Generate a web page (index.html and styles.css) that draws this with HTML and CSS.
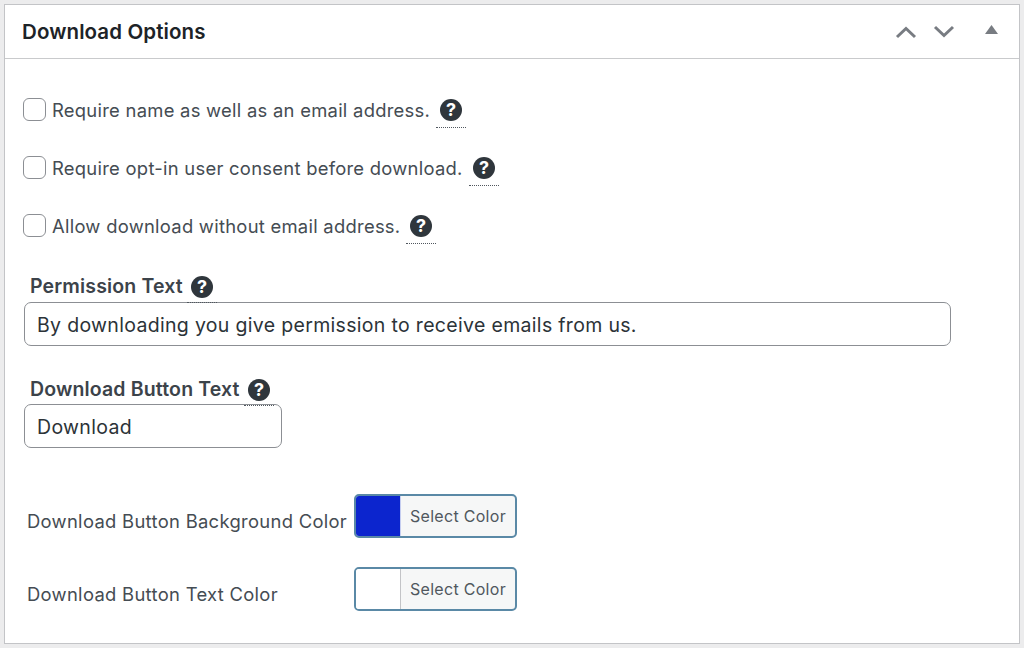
FILE: index.html
```html
<!DOCTYPE html>
<html lang="en">
<head>
<meta charset="utf-8">
<title>Download Options</title>
<link rel="stylesheet" href="styles.css">
</head>
<body>
<section class="panel">
  <header class="panel-head">
    <h2 class="panel-title">Download Options</h2>
    <div class="panel-actions">
      <svg class="chev" width="22" height="14" viewBox="0 0 22 14"><path d="M2 12 L11 3.5 L20 12" /></svg>
      <svg class="chev" width="22" height="14" viewBox="0 0 22 14"><path d="M2 2 L11 10.5 L20 2" /></svg>
      <svg class="tri" width="13" height="9" viewBox="0 0 13 9"><path d="M6.5 0 L13 9 L0 9 Z" /></svg>
    </div>
  </header>
  <div class="panel-body">
    <div class="check-list">
      <label class="check-row"><span class="box"></span><span class="check-text">Require name as well as an email address.</span>
        <span class="tip"><svg class="help" viewBox="0 0 22 22"><circle cx="11" cy="11" r="11"/><text x="11" y="17.2" text-anchor="middle">?</text></svg></span></label>
      <label class="check-row"><span class="box"></span><span class="check-text">Require opt-in user consent before download.</span>
        <span class="tip"><svg class="help" viewBox="0 0 22 22"><circle cx="11" cy="11" r="11"/><text x="11" y="17.2" text-anchor="middle">?</text></svg></span></label>
      <label class="check-row"><span class="box"></span><span class="check-text">Allow download without email address.</span>
        <span class="tip"><svg class="help" viewBox="0 0 22 22"><circle cx="11" cy="11" r="11"/><text x="11" y="17.2" text-anchor="middle">?</text></svg></span></label>
    </div>
    <div class="field field-permission">
      <div class="field-label"><span>Permission Text</span>
        <span class="tip tip-label"><svg class="help" viewBox="0 0 22 22"><circle cx="11" cy="11" r="11"/><text x="11" y="17.2" text-anchor="middle">?</text></svg></span></div>
      <div class="input input-wide">By downloading you give permission to receive emails from us.</div>
    </div>
    <div class="field field-button">
      <div class="field-label"><span>Download Button Text</span>
        <span class="tip tip-label"><svg class="help" viewBox="0 0 22 22"><circle cx="11" cy="11" r="11"/><text x="11" y="17.2" text-anchor="middle">?</text></svg></span></div>
      <div class="input input-short">Download</div>
    </div>
    <div class="colors">
      <div class="color-row"><span class="color-label">Download Button Background Color</span>
        <div class="picker"><span class="swatch swatch-blue"></span><span class="picker-text">Select Color</span></div></div>
      <div class="color-row"><span class="color-label">Download Button Text Color</span>
        <div class="picker"><span class="swatch swatch-white"></span><span class="picker-text">Select Color</span></div></div>
    </div>
  </div>
</section>
</body>
</html>
```

FILE: styles.css
```css
* { box-sizing: border-box; }
html, body { height: 100%; }
body {
  margin: 0;
  padding: 4px 4px 4px 4px;
  background: #ececed;
  font-family: Inter, "Liberation Sans", sans-serif;
  color: #454c53;
  overflow: hidden;
}
.panel {
  width: 1016px;
  height: 640px;
  background: #fff;
  border: 1px solid #c3c4c7;
}
.panel-head {
  height: 54px;
  display: flex;
  align-items: center;
  justify-content: space-between;
  border-bottom: 1px solid #c9cacc;
  padding: 0 21px 0 17px;
}
.panel-title {
  margin: 0;
  font-size: 20.5px;
  font-weight: 600;
  color: #1d2327;
  letter-spacing: 0.1px;
}
.panel-actions { display: flex; align-items: center; gap: 16px; }
.chev path { fill: none; stroke: #787c82; stroke-width: 3; }
.tri { margin-left: 14px; margin-bottom: 4px; }
.tri path { fill: #787c82; }
.panel-body { padding: 38px 0 0 18px; }
.check-list { display: flex; flex-direction: column; gap: 34px; }
.check-row { display: flex; align-items: center; height: 24px; font-size: 18.4px; letter-spacing: 0.27px; }
.box {
  width: 23px;
  height: 23px;
  border: 1.5px solid #8c8f94;
  border-radius: 6px;
  margin-right: 6px;
  background: #fff;
}
.check-text { padding-top: 1px; }
.tip {
  display: flex;
  justify-content: center;
  position: relative;
  width: 30px;
  height: 30px;
  margin: 8px 0 0 6px;
  padding-top: 1px;
  border-bottom: 1px dotted #50575e;
}
.help { width: 22px; height: 22px; display: block; }
.help circle { fill: #2f363c; }
.help text { fill: #fff; font: 700 18px Inter, sans-serif; letter-spacing: 0; }
.field { margin-left: -1px; }
.field-permission { margin-top: 37px; }
.field-button { margin-top: 31px; }
.field-label {
  display: flex;
  align-items: center;
  height: 24px;
  padding-left: 8px;
  font-size: 19.5px;
  font-weight: 600;
  letter-spacing: 0.15px;
  color: #3c434a;
}
.tip-label {
  height: 27px;
  margin: 7px 0 0 4px;
  padding-top: 0;
}
.input {
  height: 44px;
  margin: 4px 0 0 2px;
  padding: 1px 0 0 12px;
  border: 1.5px solid #8c8f94;
  border-radius: 7px;
  display: flex;
  align-items: center;
  font-size: 19.5px;
  letter-spacing: 0.32px;
  color: #2c3338;
}
.field-button .input { margin-top: 3px; }
.input-wide { width: 927px; }
.input-short { width: 258px; }
.colors { margin: 46px 0 0 -1px; display: flex; flex-direction: column; gap: 29px; }
.color-row { display: flex; align-items: center; height: 44px; padding-left: 5px; }
.color-label { width: 327px; font-size: 18.4px; letter-spacing: 0.31px; padding-top: 10px; }
.picker {
  width: 163px;
  height: 44px;
  display: flex;
  border: 2px solid #5a89a6;
  border-radius: 5px;
  overflow: hidden;
  background: #f6f7f7;
}
.swatch { width: 45px; border-right: 1px solid #c3c4c7; }
.swatch-blue { background: #0c25ce; border-right-color: #c5cdf0; }
.swatch-white { background: #fff; }
.picker-text { flex: 1; display: flex; align-items: center; justify-content: center; font-size: 16px; color: #50575e; letter-spacing: 0.3px; padding-bottom: 1px; }
```
